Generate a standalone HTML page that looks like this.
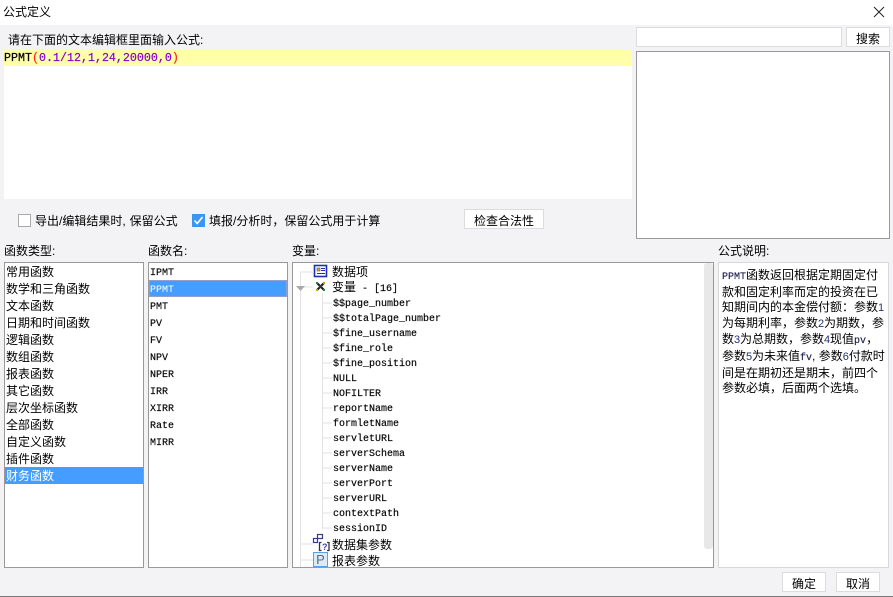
<!DOCTYPE html>
<html><head><meta charset="utf-8"><style>
html,body{margin:0;padding:0;background:#fff}
#r{position:relative;width:893px;height:597px;overflow:hidden;background:#f3f3f5;font:12px/17px "WenQuanYi Zen Hei","Liberation Sans","Noto Sans CJK SC",sans-serif;color:#000}
#r div,#r span.a,#r svg{position:absolute;box-sizing:border-box}
.t{white-space:nowrap}
.box{background:#fff;border:1px solid #999}
.btn{background:#fff;border:1px solid #dcdcdc;text-align:center}
.m{font-family:"Liberation Mono",monospace;font-size:10px;white-space:pre;color:#000;-webkit-text-stroke:.15px #000}
.c{white-space:nowrap;left:1px;right:0;height:17px}
.s{font-family:"Liberation Mono",monospace;font-size:10px;-webkit-text-stroke:.15px}
.d{font-family:"Liberation Sans",sans-serif;font-size:11px;color:#237;display:inline-block;width:6px}
</style></head><body><div id="r">
<div style="left:0;top:0;width:893px;height:25px;background:#fff"></div>
<div class="t" style="left:3px;top:4px">公式定义</div>
<svg style="left:873px;top:6px" width="12" height="12" viewBox="0 0 12 12"><path d="M1 1L11 11M11 1L1 11" stroke="#222" stroke-width="1" fill="none"/></svg>
<div class="t" style="left:8px;top:32px">请在下面的文本编辑框里面输入公式:</div>

<div style="left:4px;top:50px;width:628px;height:149px;background:#fff"></div>
<div style="left:4px;top:50px;width:628px;height:16px;background:#ffffaa"></div>
<div class="t" style="left:4px;top:50px;font:11.67px/17px 'Liberation Mono',monospace;-webkit-text-stroke:.2px"><span>PPMT</span><span style="color:#f22">(</span><span style="color:#80c">0.1/12,1,24,20000,0</span><span style="color:#f22">)</span></div>

<div style="left:636px;top:27px;width:206px;height:20px;background:#fff;border:1px solid #dcdcdc"></div>
<div class="btn" style="left:846px;top:27px;width:44px;height:20px;line-height:20px;padding-top:1px">搜索</div>
<div class="box" style="left:636px;top:51px;width:254px;height:188px"></div>

<div style="left:18px;top:214px;width:13px;height:13px;background:#fff;border:1px solid #aaa"></div>
<div class="t" style="left:35px;top:213px">导出/编辑结果时,<span style="margin-left:4px">保留公式</span></div>
<div style="left:192px;top:214px;width:13px;height:13px;background:#3c96f0"></div>
<svg style="left:192px;top:214px" width="13" height="13" viewBox="0 0 13 13"><path d="M2.500 6.500L5.200 9.500L10.500 3" stroke="#fff" stroke-width="1.6" fill="none"/></svg>
<div class="t" style="left:209px;top:213px">填报/分析时&#65292;保留公式用于计算</div>
<div class="btn" style="left:464px;top:209px;width:80px;height:20px;line-height:20px;padding-top:1px">检查合法性</div>

<div class="t" style="left:4px;top:243px">函数类型:</div>
<div class="t" style="left:148px;top:243px">函数名:</div>
<div class="t" style="left:292px;top:243px">变量:</div>
<div class="t" style="left:718px;top:243px">公式说明:</div>

<div class="box" style="left:4px;top:262px;width:140px;height:306px">
<div class="c" style="top:1px">常用函数</div>
<div class="c" style="top:18px">数学和三角函数</div>
<div class="c" style="top:35px">文本函数</div>
<div class="c" style="top:52px">日期和时间函数</div>
<div class="c" style="top:69px">逻辑函数</div>
<div class="c" style="top:86px">数组函数</div>
<div class="c" style="top:103px">报表函数</div>
<div class="c" style="top:120px">其它函数</div>
<div class="c" style="top:137px">层次坐标函数</div>
<div class="c" style="top:154px">全部函数</div>
<div class="c" style="top:171px">自定义函数</div>
<div class="c" style="top:188px">插件函数</div>
<div style="left:0;right:0;top:204px;height:17px;background:#459eff"></div>
<div class="c" style="top:205px;color:#fff">财务函数</div>
</div>

<div class="box" style="left:148px;top:262px;width:140px;height:306px">
<div class="c m" style="top:1px;line-height:19px;height:19px">IPMT</div>
<div style="left:0;right:0;top:17px;height:17px;background:#459eff;border:1px solid #8f9fd0"></div>
<div class="c m" style="top:18px;line-height:19px;height:19px;color:#fff;-webkit-text-stroke:0">PPMT</div>
<div class="c m" style="top:35px;line-height:19px;height:19px">PMT</div>
<div class="c m" style="top:52px;line-height:19px;height:19px">PV</div>
<div class="c m" style="top:69px;line-height:19px;height:19px">FV</div>
<div class="c m" style="top:86px;line-height:19px;height:19px">NPV</div>
<div class="c m" style="top:103px;line-height:19px;height:19px">NPER</div>
<div class="c m" style="top:120px;line-height:19px;height:19px">IRR</div>
<div class="c m" style="top:137px;line-height:19px;height:19px">XIRR</div>
<div class="c m" style="top:154px;line-height:19px;height:19px">Rate</div>
<div class="c m" style="top:171px;line-height:19px;height:19px">MIRR</div>
</div>

<div class="box" style="left:292px;top:262px;width:422px;height:306px;overflow:hidden">
<svg style="left:0;top:0" width="60" height="304" viewBox="0 0 60 304"><g stroke="#e2e2e2" fill="none"><path d="M7.500 9V304M7.500 9H20M7.500 24H20M7.500 281H20M7.500 297H20M29.500 30V266M29.500 40H39M29.500 55H39M29.500 70H39M29.500 85H39M29.500 100H39M29.500 115H39M29.500 130H39M29.500 145H39M29.500 160H39M29.500 175H39M29.500 190H39M29.500 205H39M29.500 220H39M29.500 235H39M29.500 250H39M29.500 265H39"/></g><path d="M3 23H12L7.500 28Z" fill="#aaa"/>
<rect x="21.500" y="2.500" width="12" height="11" fill="#fff" stroke="#1f2fb0" stroke-width="1.6"/><rect x="24" y="5" width="3" height="3" fill="#e0b800" stroke="#1f2fb0" stroke-width=".5"/><path d="M28 5.500H32M28 7.500H32M24 10.500H32" stroke="#1f2fb0"/>
<path d="M23.500 19.500L31.500 27.500M31.500 19.500L23.500 27.500" stroke="#1a1a1a" stroke-width="2"/><rect x="23" y="19" width="2" height="2" fill="#2a8a2a"/><rect x="30" y="19" width="2" height="2" fill="#c8a800"/><rect x="26" y="22" width="3" height="3" fill="#333"/><rect x="23" y="26" width="2" height="2" fill="#c8a800"/><rect x="30" y="26" width="2" height="2" fill="#2a8a2a"/>
<rect x="20.500" y="275.500" width="4" height="4" fill="#fff" stroke="#3a3a88" stroke-width="1.200"/><rect x="24.500" y="271.500" width="5" height="4" fill="#fff" stroke="#3a3a88" stroke-width="1.200"/>
<path d="M28.500 279.500H26.500V287.500H28.500M34 279.500H36V287.500H34" fill="none" stroke="#333" stroke-width="1.300"/>
<rect x="20.500" y="289.500" width="14" height="14" fill="#d8ecff" stroke="#5a9fe8"/></svg>
<div class="t" style="left:21px;top:290px;width:13px;text-align:center;color:#667;font:13px/14px 'Liberation Sans',sans-serif">P</div>
<div class="t" style="left:29px;top:279px;color:#44a;font:bold 9px/10px 'Liberation Sans',sans-serif">?</div>
<div class="t" style="left:39px;top:1px">数据项</div>
<div class="t" style="left:39px;top:16px">变量<span class="m"> - [16]</span></div>
<div class="m" style="left:40px;top:34px;line-height:15px">$$page_number</div>
<div class="m" style="left:40px;top:49px;line-height:15px">$$totalPage_number</div>
<div class="m" style="left:40px;top:64px;line-height:15px">$fine_username</div>
<div class="m" style="left:40px;top:79px;line-height:15px">$fine_role</div>
<div class="m" style="left:40px;top:94px;line-height:15px">$fine_position</div>
<div class="m" style="left:40px;top:109px;line-height:15px">NULL</div>
<div class="m" style="left:40px;top:124px;line-height:15px">NOFILTER</div>
<div class="m" style="left:40px;top:139px;line-height:15px">reportName</div>
<div class="m" style="left:40px;top:154px;line-height:15px">formletName</div>
<div class="m" style="left:40px;top:169px;line-height:15px">servletURL</div>
<div class="m" style="left:40px;top:184px;line-height:15px">serverSchema</div>
<div class="m" style="left:40px;top:199px;line-height:15px">serverName</div>
<div class="m" style="left:40px;top:214px;line-height:15px">serverPort</div>
<div class="m" style="left:40px;top:229px;line-height:15px">serverURL</div>
<div class="m" style="left:40px;top:244px;line-height:15px">contextPath</div>
<div class="m" style="left:40px;top:259px;line-height:15px">sessionID</div>
<div class="t" style="left:39px;top:274px">数据集参数</div>
<div class="t" style="left:39px;top:290px">报表参数</div>
<div style="left:411px;top:0;width:9px;height:286px;background:#e8e8e8;border-radius:3px"></div>
</div>

<div style="left:718px;top:262px;width:171px;height:306px;background:#fff;border:1px solid #d8d8d8"></div>
<div class="t" style="left:722px;top:268px;line-height:15px;font-size:12px"><span class="s" style="color:#202050">PPMT</span>函数返回根据定期固定付<br>款和固定利率而定的投资在已<br>知期间内的本金偿付额&#65306;参数<span class="d">1</span><br>为每期利率&#65292;参数<span class="d">2</span>为期数&#65292;参<br>数<span class="d">3</span>为总期数&#65292;参数<span class="d">4</span>现值<span class="s" style="color:#202050">pv</span>&#65292;<br>参数<span class="d">5</span>为未来值<span class="s" style="color:#202050">fv</span>,&nbsp;参数<span class="d">6</span>付款时<br>间是在期初还是期末&#65292;前四个<br>参数必填&#65292;后面两个选填。</div>

<div class="btn" style="left:782px;top:572px;width:44px;height:20px;line-height:20px;padding-top:1px">确定</div>
<div class="btn" style="left:836px;top:572px;width:44px;height:20px;line-height:20px;padding-top:1px">取消</div>
<div style="left:0;top:596px;width:893px;height:1px;background:#777"></div>
</div></body></html>
